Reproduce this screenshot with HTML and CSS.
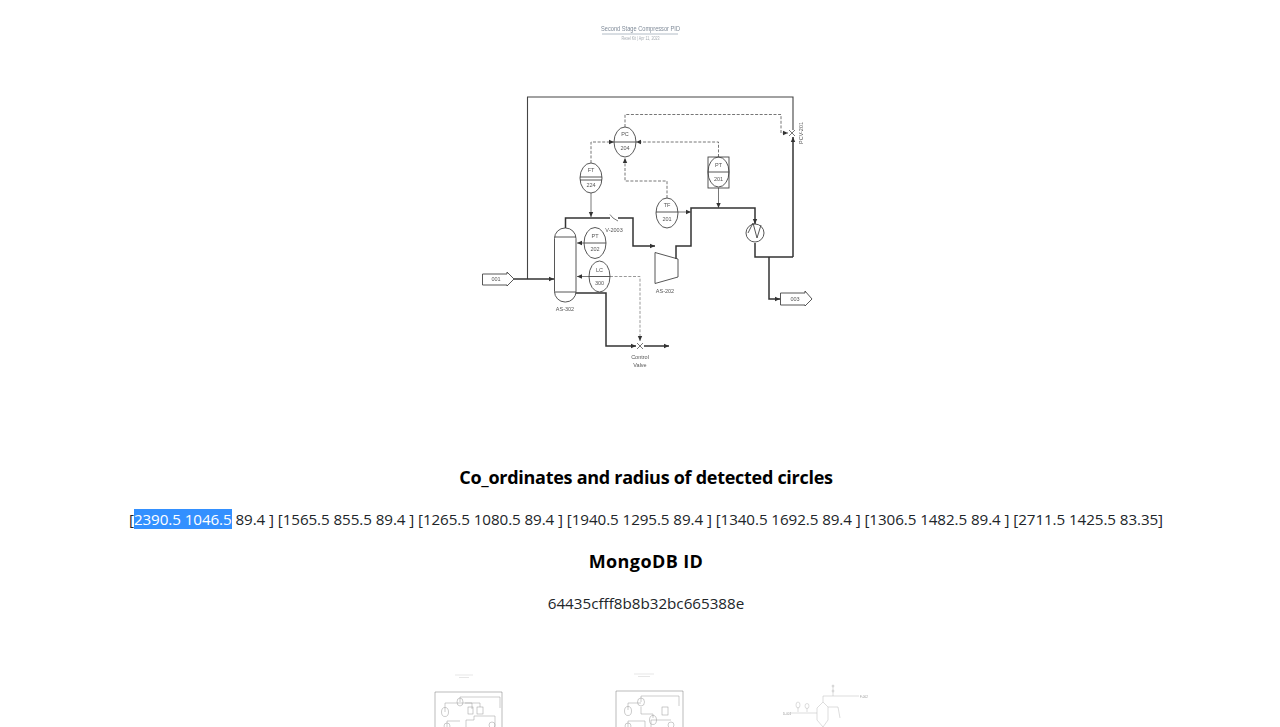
FILE: index.html
```html
<!DOCTYPE html>
<html lang="en">
<head>
<meta charset="utf-8">
<title>Detected circles</title>
<link rel="stylesheet" href="styles.css">
</head>
<body>
<main class="page">
  <svg class="diagram" viewBox="0 0 1280 446" width="1280" height="446" role="img" aria-label="Second Stage Compressor PID">
    <defs>
      <marker id="arr" markerWidth="6" markerHeight="6" refX="5" refY="3" orient="auto" markerUnits="userSpaceOnUse"><path d="M0 .8L5 3L0 5.2Z" fill="#333"/></marker>
    </defs>
    <g class="soft">
      <text class="doc-title" x="640.5" y="30.5" textLength="79" lengthAdjust="spacingAndGlyphs">Second Stage Compressor PID</text>
      <path class="rule" d="M602 34H678"/>
      <text class="doc-sub" x="640.5" y="40" textLength="38" lengthAdjust="spacingAndGlyphs">Rexel Kit | Apr 11, 2023</text>

      <path class="pipe-thin" d="M793 130V97H527.500V279"/>
      <path class="pipe" d="M793 257V137" marker-end="url(#arr)"/>
      <path class="pipe" d="M755 243V257H793"/>
      <path class="pipe" d="M769 257V299H780" marker-end="url(#arr)"/>
      <path class="pipe" d="M514 279H554" marker-end="url(#arr)"/>
      <path class="pipe" d="M565.500 228V218H610"/>
      <path class="pipe" d="M618 218H633V246H655" marker-end="url(#arr)"/>
      <path class="pipe" d="M676 259V246H691V208H755V224" marker-end="url(#arr)"/>
      <path class="pipe" d="M576 293H606V346H636" marker-end="url(#arr)"/>
      <path class="pipe" d="M644 346H669" marker-end="url(#arr)"/>
      <path class="thin" d="M718.500 188V208" marker-end="url(#arr)"/>
      <path class="thin" d="M678 212H691" marker-end="url(#arr)"/>
      <path class="thin" d="M584 243H577" marker-end="url(#arr)"/>
      <path class="thin" d="M589 276.500H577" marker-end="url(#arr)"/>
      <path class="thin" d="M591 193V217" marker-end="url(#arr)"/>

      <path class="dash" d="M625 127V114.500H781V133H788" marker-end="url(#arr)"/>
      <path class="dash" d="M591 163V142H614" marker-end="url(#arr)"/>
      <path class="dash" d="M718.500 157V142H636" marker-end="url(#arr)"/>
      <path class="dash" d="M667 198V181H625V158" marker-end="url(#arr)"/>
      <path class="dash-light" d="M610 276.500H640V341" marker-end="url(#arr)"/>

      <path class="shape" d="M482.500 274H507L507 272L514 279L507 286L507 285H482.500Z"/>
      <path class="shape" d="M780.500 293H805L805 291L812 299L805 306L805 305H780.500Z"/>
      <text class="tag" x="496" y="281">001</text>
      <text class="tag" x="795" y="301">003</text>

      <rect class="shape" x="554.500" y="228" width="21.500" height="74" rx="10.500"/>
      <path class="shape" d="M554.500 237H576M554.500 292H576"/>
      <text class="tag" x="565" y="311">AS-302</text>

      <path class="shape" d="M655 252.500L678 259V277L655 283.500Z"/>
      <text class="tag" x="665" y="293">AS-202</text>

      <circle class="shape" cx="755" cy="233" r="9"/>
      <path class="shape" d="M748 233L753 223L757 238L761 225"/>

      <path class="thin" d="M610 214.500L613 218L618 221"/>
      <text class="tag" x="614" y="232">V-2003</text>

      <path class="thin" d="M637 343L643 349M643 343L637 349"/>
      <path class="thin" d="M789 130L795 136M795 130L789 136"/>
      <text class="tag" x="640" y="359">Control</text>
      <text class="tag" x="640" y="367">Valve</text>
      <text class="tag" transform="translate(803 133) rotate(-90)">PCV-201</text>

      <ellipse class="shape" cx="625" cy="142" rx="11" ry="15"/>
      <path class="shape" d="M614 142H636"/>
      <text class="tag" x="625" y="136">PC</text><text class="tag" x="625" y="150">204</text>

      <ellipse class="shape" cx="591" cy="178" rx="11" ry="15"/>
      <path class="shape" d="M580 177H602M580 180H602"/>
      <text class="tag" x="591" y="172">FT</text><text class="tag" x="591" y="187">224</text>

      <rect class="shape" x="708" y="157" width="21" height="31"/>
      <ellipse class="shape" cx="718.500" cy="172" rx="10.500" ry="15"/>
      <path class="shape" d="M708 172H729"/>
      <text class="tag" x="718.500" y="167">PT</text><text class="tag" x="718.500" y="181">201</text>

      <ellipse class="shape" cx="667" cy="213" rx="11" ry="15"/>
      <path class="shape" d="M656 212H678"/>
      <text class="tag" x="667" y="207">TF</text><text class="tag" x="667" y="221">201</text>

      <ellipse class="shape" cx="595" cy="243" rx="11" ry="15.500"/>
      <path class="shape" d="M584 243H606"/>
      <text class="tag" x="595" y="238">PT</text><text class="tag" x="595" y="251">202</text>

      <ellipse class="shape" cx="599.500" cy="276.500" rx="10.500" ry="15.500"/>
      <path class="shape" d="M589 276.500H610"/>
      <text class="tag" x="599.500" y="272">LC</text><text class="tag" x="599.500" y="285">300</text>
    </g>
  </svg>

  <section class="results">
    <h3 class="heading heading-long">Co_ordinates and radius of detected circles</h3>
    <p class="value value-coords">[<span class="picked">2390.5 1046.5</span> 89.4 ] [1565.5 855.5 89.4 ] [1265.5 1080.5 89.4 ] [1940.5 1295.5 89.4 ] [1340.5 1692.5 89.4 ] [1306.5 1482.5 89.4 ] [2711.5 1425.5 83.35]</p>
    <h3 class="heading heading-short">MongoDB ID</h3>
    <p class="value">64435cfff8b8b32bc665388e</p>
  </section>

  <div class="thumbs">
    <svg class="thumb thumb-a" viewBox="0 0 100 67" width="100" height="67" aria-hidden="true">
      <g class="mini">
        <path class="mini-title" d="M35 15H53M39 17.500H49"/>
        <path class="frame" d="M15 67V32H82V67"/>
        <path d="M40 42V37H80V48M25 52V43H40M52 49V43H40M60 47V43H45M46 67V60H54V56H75V67M27 67V61H40"/>
        <ellipse cx="40" cy="42" rx="3" ry="4"/><ellipse cx="25" cy="52" rx="3.500" ry="4.500"/>
        <rect x="48" y="47" width="5" height="7"/><rect x="57" y="47" width="6" height="7"/>
        <circle cx="72" cy="65" r="3"/><circle cx="27" cy="66" r="3"/>
      </g>
    </svg>
    <svg class="thumb thumb-b" viewBox="0 0 100 67" width="100" height="67" aria-hidden="true">
      <g class="mini">
        <path class="mini-title" d="M33 14H53M37 16.500H49"/>
        <path class="frame" d="M15 67V31H82V67"/>
        <path d="M40 42V36H78V46M27 50V43H40M40 47V54H52V58M50 67V60H70M27 67V61H44V67"/>
        <ellipse cx="40" cy="42" rx="3.500" ry="4"/><ellipse cx="27" cy="51" rx="3.500" ry="4.500"/><ellipse cx="52" cy="60" rx="3.500" ry="4.500"/>
        <rect x="61" y="47" width="6" height="8"/>
        <circle cx="70" cy="65" r="3"/><circle cx="27" cy="66" r="3"/>
      </g>
    </svg>
    <svg class="thumb thumb-c" viewBox="0 0 110 67" width="110" height="67" aria-hidden="true">
      <g class="mini mini-light">
        <path d="M66 25V36M56 36H92M23 53H50M31 52V47M40 52V48M50 48L56 42L61 47M61 47H71L73 58M56 42V36M50 48V60L56 67L61 60V47"/>
        <circle cx="66" cy="26" r="1"/><circle cx="66" cy="31" r="1"/>
        <ellipse cx="31" cy="45" rx="2" ry="3"/><ellipse cx="40" cy="46" rx="2" ry="2.500"/>
        <text class="mini-tag" x="93" y="38">F-002</text>
        <text class="mini-tag" x="16" y="55">D-001</text>
      </g>
    </svg>
  </div>
</main>
</body>
</html>
```
FILE: styles.css
```css
* { box-sizing: border-box; }

html, body {
  margin: 0;
  background: #fff;
}

body {
  font-family: "Open Sans", "Noto Sans", "Liberation Sans", sans-serif;
  color: #212529;
}

.page {
  width: 1280px;
}

.diagram {
  display: block;
}

.soft {
  filter: blur(0.45px);
}

.doc-title {
  font: 8px "Liberation Sans", sans-serif;
  fill: #7f8a98;
  text-anchor: middle;
}

.doc-sub {
  font: 4.500px "Liberation Sans", sans-serif;
  fill: #a5abb2;
  text-anchor: middle;
}

.rule {
  stroke: #a9b4c0;
  stroke-width: 0.9;
  fill: none;
}

.pipe {
  stroke: #333;
  stroke-width: 1.5;
  fill: none;
}

.pipe-thin {
  stroke: #444;
  stroke-width: 1.1;
  fill: none;
}

.thin {
  stroke: #555;
  stroke-width: 0.8;
  fill: none;
}

.dash {
  stroke: #666;
  stroke-width: 0.9;
  stroke-dasharray: 3 1.6;
  fill: none;
}

.dash-light {
  stroke: #999;
  stroke-width: 1;
  stroke-dasharray: 3 1.6;
  fill: none;
}

.shape {
  stroke: #444;
  stroke-width: 0.9;
  fill: none;
}

.tag {
  font: 5.500px "Liberation Sans", sans-serif;
  fill: #555;
  text-anchor: middle;
}

.results {
  padding-left: 12px;
  text-align: center;
}

.heading {
  margin: 19px 0;
  font-size: 18px;
  line-height: 25px;
  font-weight: 700;
  color: #000;
}

.heading-long {
  letter-spacing: -0.28px;
}

.heading-short {
  letter-spacing: 0.4px;
}

.value {
  margin: 19px 0;
  font-size: 15.2px;
  line-height: 21px;
}

.value-coords {
  letter-spacing: -0.08px;
}

.picked {
  background: #3390ff;
  color: #fff;
}

.thumbs {
  display: flex;
  height: 67px;
  padding-left: 420px;
  margin-top: 46px;
}

.thumb {
  display: block;
  flex: none;
  filter: blur(0.4px);
}

.thumb-b {
  margin-left: 81px;
}

.thumb-c {
  margin-left: 66px;
}

.mini {
  stroke: #999;
  stroke-width: 0.5;
  fill: none;
}

.mini-light {
  stroke: #bbb;
}

.mini-title {
  stroke: #ccc;
}

.frame {
  stroke: #777;
}

.mini-tag {
  font: 3px "Liberation Sans", sans-serif;
  fill: #999;
  stroke: none;
}
```
